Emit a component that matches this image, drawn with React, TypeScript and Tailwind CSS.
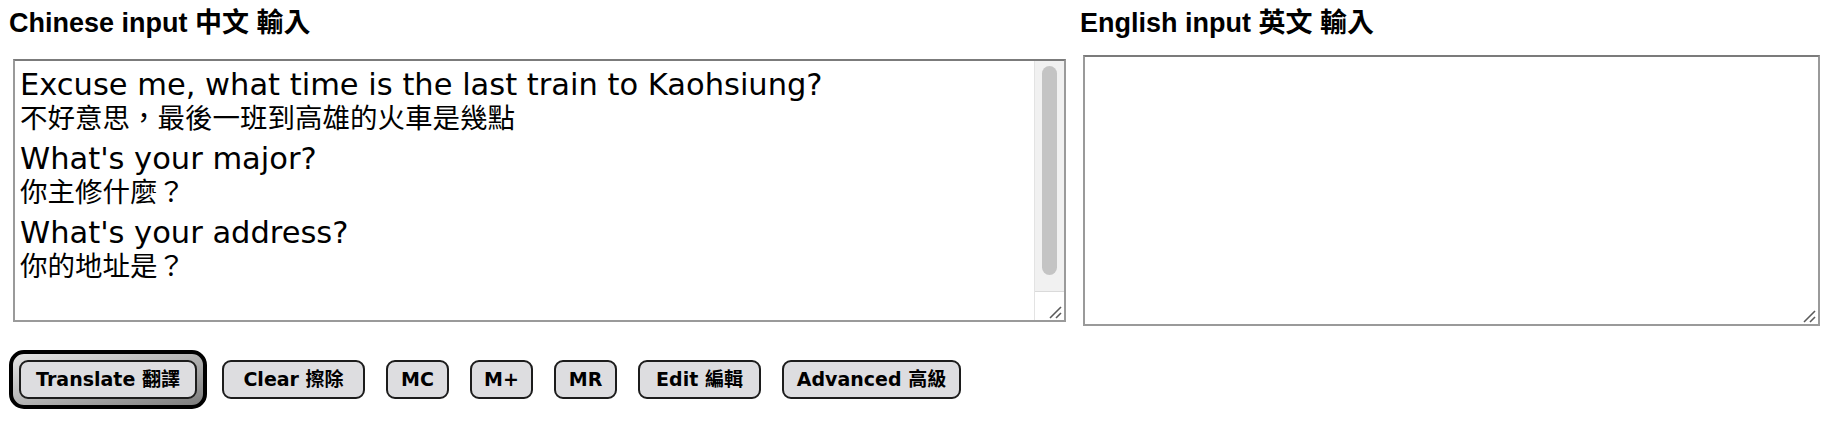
import React from 'react'

const LINES: { en: string; zh: string }[] = [
  { en: 'Excuse me, what time is the last train to Kaohsiung?', zh: '不好意思，最後一班到高雄的火車是幾點' },
  { en: "What's your major?", zh: '你主修什麼？' },
  { en: "What's your address?", zh: '你的地址是？' },
]

const BUTTONS: { label: string; w: string }[] = [
  { label: 'Clear 擦除', w: 'w-[143px]' },
  { label: 'MC', w: 'w-[63px]' },
  { label: 'M+', w: 'w-[63px]' },
  { label: 'MR', w: 'w-[63px]' },
  { label: 'Edit 編輯', w: 'w-[123px]' },
  { label: 'Advanced 高級', w: 'w-[179px]' },
]

const headFont = { fontFamily: '"Liberation Sans", "Noto Sans CJK TC", sans-serif' }
const enFont = { fontFamily: '"DejaVu Sans", "Noto Sans CJK TC", sans-serif' }
const zhFont = { fontFamily: '"Noto Sans CJK TC", sans-serif' }

function Grip() {
  return (
    <svg width="14" height="14" viewBox="0 0 14 14" className="block">
      <line x1="2" y1="13" x2="13" y2="2" stroke="#5a5a5a" strokeWidth="1.6" />
      <line x1="8" y1="13" x2="13" y2="8" stroke="#5a5a5a" strokeWidth="1.6" />
    </svg>
  )
}

function Btn({ label, w }: { label: string; w: string }) {
  return (
    <button
      type="button"
      className={`${w} h-[39px] rounded-[9px] border-2 border-[#1c1c1c] bg-[#dddde0] text-[19px] font-bold text-black leading-none text-center`}
      style={{ fontFamily: '"DejaVu Sans", "Noto Sans CJK TC", sans-serif' }}
    >
      {label}
    </button>
  )
}

export default function App() {
  return (
    <div className="w-[1840px] h-[423px] bg-white pt-[8px] pl-[9px] overflow-hidden" lang="zh-Hant">
      <div className="flex">
        {/* Chinese side */}
        <div className="w-[1057px] shrink-0">
          <h2 className="text-[27px] font-bold leading-[31px] text-black" style={headFont}>
            Chinese input 中文 輸入
          </h2>
          <div className="ml-[4px] mt-[20px] h-[263px] border-2 border-[#9a9a9a] border-t-[#7b7b7b] flex bg-white">
            <div className="flex-1 pl-[5px] pt-[6px] text-black">
              {LINES.map((l) => (
                <div key={l.en} className="mb-[10px]">
                  <div className="text-[30.5px] leading-[35px]" style={enFont}>
                    {l.en}
                  </div>
                  <div className="text-[27.5px] leading-[29px]" style={zhFont}>
                    {l.zh}
                  </div>
                </div>
              ))}
            </div>
            <div className="w-[30px] flex flex-col bg-[#f1f1f1] border-l border-[#e3e3e3]">
              <div className="flex-1 flex justify-center pt-[5px] pb-[16px]">
                <div className="w-[15px] h-full rounded-full bg-[#c4c4c4]" />
              </div>
              <div className="h-[29px] border-t border-[#dadada] bg-white flex items-end justify-end pr-[2px] pb-[1px]">
                <Grip />
              </div>
            </div>
          </div>
        </div>

        {/* English side */}
        <div className="ml-[14px] w-[740px] shrink-0">
          <h2 className="text-[27px] font-bold leading-[31px] text-black" style={headFont}>
            English input 英文 輸入
          </h2>
          <div className="ml-[3px] mt-[16px] h-[271px] border-2 border-[#9a9a9a] border-t-[#7b7b7b] bg-white flex items-end justify-end pr-[2px] pb-[1px]">
            <Grip />
          </div>
        </div>
      </div>

      <div className="mt-[24px] flex items-center gap-[21px]">
        <div className="rounded-[15px] border-[4px] border-black bg-gradient-to-br from-[#e6e6e6] via-[#b4b4b4] to-[#7c7c7c] p-[6px] mr-[-6px]">
          <Btn label="Translate 翻譯" w="w-[178px]" />
        </div>
        {BUTTONS.map((b) => (
          <Btn key={b.label} label={b.label} w={b.w} />
        ))}
      </div>
    </div>
  )
}
